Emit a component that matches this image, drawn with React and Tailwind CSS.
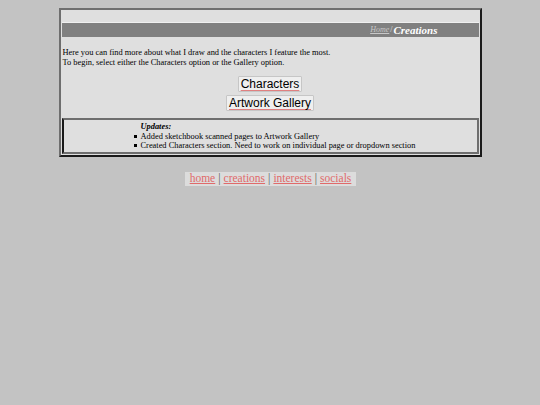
export default function App() {
  return (
    <div className="min-h-[405px] w-full bg-[#c3c3c3] pt-2" style={{ fontFamily: '"Liberation Serif", serif' }}>
      <div className="mx-auto w-[423px] border-2 border-t-[#6e6e6e] border-l-[#6e6e6e] border-r-[#1a1a1a] border-b-[#1a1a1a] bg-[#dfdfdf] px-[1px] pt-[12px] pb-[1px]">
        <div className="border-t border-t-[#efefef] bg-[#808080] h-[15px] flex items-center justify-end pr-[41px]">
          <a className="text-[8px] italic underline text-[#c8c8c8] leading-none" href="#">Home</a>
          <span className="text-[8px] text-[#e0e0e0] mx-[1px] leading-none">/</span>
          <span className="text-[11px] italic font-bold text-white leading-none">Creations</span>
        </div>
        <div className="pt-[11px] pl-[1px] text-[8.4px] leading-[10px] text-black">
          <div>Here you can find more about what I draw and the characters I feature the most.</div>
          <div>To begin, select either the Characters option or the Gallery option.</div>
        </div>
        <div className="flex flex-col items-center gap-[3px] mt-[8px]" style={{ fontFamily: '"Liberation Sans", sans-serif' }}>
          <button className="bg-[#efefef] border border-[#c6c6c6] rounded-[1px] px-[2px] h-[16px] text-[12px] leading-none text-black underline decoration-[#e08080] decoration-[1px] underline-offset-[2px]">Characters</button>
          <button className="bg-[#efefef] border border-[#c6c6c6] rounded-[1px] px-[2px] h-[16px] text-[12px] leading-none text-black underline decoration-[#e08080] decoration-[1px] underline-offset-[2px]">Artwork Gallery</button>
        </div>
        <div className="mt-[7px] border-2 border-t-[#6e6e6e] border-r-[#6e6e6e] border-l-[#1a1a1a] border-b-[#6e6e6e] pl-[77px] pt-[2px] pb-[1px] text-[8.4px] leading-[9.5px] text-black">
          <div className="italic font-bold">Updates:</div>
          <ul className="pl-0">
            <li className="flex items-center h-[9.5px]"><span className="w-[3px] h-[3px] bg-black -ml-[7px] mr-[4px] inline-block"></span>Added sketchbook scanned pages to Artwork Gallery</li>
            <li className="flex items-center h-[9.5px]"><span className="w-[3px] h-[3px] bg-black -ml-[7px] mr-[4px] inline-block"></span>Created Characters section. Need to work on individual page or dropdown section</li>
          </ul>
        </div>
      </div>
      <div className="flex justify-center mt-[15px]">
        <div className="bg-[#dcdcdc] px-[5px] h-[14px] flex items-center text-[11.5px] leading-none text-[#555] ml-[1px]">
          <a href="#" className="text-[#e06a6a] underline">home</a>
          <span className="mx-[3px]">|</span>
          <a href="#" className="text-[#e06a6a] underline">creations</a>
          <span className="mx-[3px]">|</span>
          <a href="#" className="text-[#e06a6a] underline">interests</a>
          <span className="mx-[3px]">|</span>
          <a href="#" className="text-[#e06a6a] underline">socials</a>
        </div>
      </div>
    </div>
  );
}
